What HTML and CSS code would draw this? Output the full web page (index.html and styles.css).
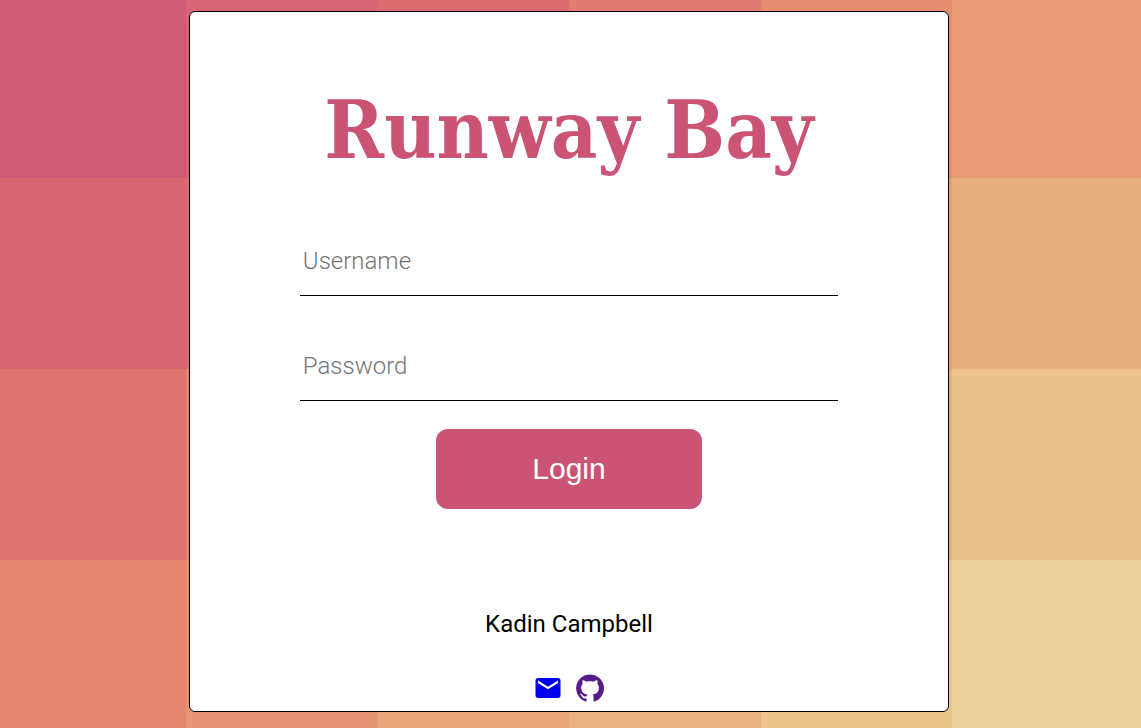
FILE: index.html
```html
<!DOCTYPE html>
<html lang="en">
<head>
<meta charset="utf-8">
<meta name="viewport" content="width=device-width, initial-scale=1">
<title>Runway Bay</title>
<link rel="stylesheet" href="styles.css">
</head>
<body>
<svg class="backdrop" viewBox="0 0 1141 728" preserveAspectRatio="none" shape-rendering="crispEdges" aria-hidden="true">
  <rect width="1141" height="728" fill="#e17c72"/>
  <rect width="186" height="178" fill="#d05b76"/>
  <rect x="186" width="191" height="178" fill="#d86575"/>
  <rect x="377" width="192" height="178" fill="#db6d70"/>
  <rect x="569" width="192" height="178" fill="#e17c72"/>
  <rect x="761" width="191" height="178" fill="#e68d70"/>
  <rect x="952" width="189" height="178" fill="#e79c77"/>
  <rect y="178" width="186" height="191" fill="#d66670"/>
  <rect x="186" y="178" width="383" height="191" fill="#db6d70"/>
  <rect x="569" y="178" width="383" height="191" fill="#e79c77"/>
  <rect x="952" y="178" width="189" height="191" fill="#e8af7f"/>
  <rect y="369" width="186" height="191" fill="#de746f"/>
  <rect x="186" y="369" width="383" height="191" fill="#e5846f"/>
  <rect x="569" y="369" width="383" height="191" fill="#e8af7f"/>
  <rect x="952" y="369" width="189" height="191" fill="#eac28b"/>
  <rect y="560" width="186" height="168" fill="#e5846f"/>
  <rect x="186" y="560" width="191" height="168" fill="#e69474"/>
  <rect x="377" y="560" width="192" height="168" fill="#e9a57a"/>
  <rect x="569" y="560" width="192" height="168" fill="#ebb281"/>
  <rect x="761" y="560" width="191" height="168" fill="#ecc58d"/>
  <rect x="952" y="560" width="189" height="168" fill="#ead099"/>
</svg>
<main class="card">
  <h1 class="title">Runway Bay</h1>
  <form class="login">
    <input class="field" type="text" name="username" placeholder="Username" aria-label="Username">
    <input class="field" type="password" name="password" placeholder="Password" aria-label="Password">
    <button class="submit" type="submit">Login</button>
  </form>
  <footer class="footer">
    <p class="author">Kadin Campbell</p>
    <nav class="links" aria-label="Contact">
      <a class="link mail" href="#mail" aria-label="Email"><svg class="icon" viewBox="0 0 24 24"><path fill="currentColor" d="M20 4H4c-1.100 0-2 .9-2 2v12c0 1.100.9 2 2 2h16c1.100 0 2-.9 2-2V6c0-1.100-.9-2-2-2zm0 4l-8 5-8-5V6l8 5 8-5v2z"/></svg></a>
      <a class="link github" href="#github" aria-label="GitHub"><svg class="icon" viewBox="0 0 24 24"><path fill="currentColor" d="M12 1.270a11 11 0 0 0-3.480 21.460c.55.09.73-.28.73-.55v-1.840c-3.030.64-3.670-1.460-3.670-1.460-.55-1.290-1.280-1.650-1.280-1.650-.92-.65.100-.65.100-.65 1.100 0 1.730 1.100 1.730 1.100.92 1.650 2.570 1.200 3.210.92a2 2 0 0 1 .64-1.470c-2.470-.27-5.040-1.190-5.040-5.500 0-1.100.46-2.100 1.200-2.840a3.760 3.760 0 0 1 0-2.930s.91-.28 3.110 1.100c1.800-.49 3.700-.49 5.500 0 2.100-1.380 3.020-1.100 3.020-1.100a3.760 3.760 0 0 1 .1 2.930c.83.740 1.200 1.740 1.200 2.940 0 4.210-2.570 5.130-5.040 5.400.45.370.82.920.82 2.020v3.030c0 .27.100.64.730.55A11 11 0 0 0 12 1.270"/></svg></a>
    </nav>
  </footer>
</main>
</body>
</html>
```
FILE: styles.css
```css
* {
  box-sizing: border-box;
}

body {
  margin: 0;
  min-height: 100vh;
  padding: 11px 3px 16px 0;
  font-family: Roboto, "Liberation Sans", sans-serif;
}

.backdrop {
  position: fixed;
  inset: 0;
  z-index: -1;
  width: 100%;
  height: 100%;
}

.card {
  display: flex;
  flex-direction: column;
  align-items: center;
  width: 66.8%;
  margin: 0 auto;
  padding: 68px 0 8px;
  border: 1px solid #000;
  border-radius: 6px;
  background: #fff;
}

.title {
  margin: 0;
  color: #cb5475;
  font: bold 80px/100px "DejaVu Serif Condensed", "DejaVu Serif", serif;
}

.login {
  display: flex;
  flex-direction: column;
  align-items: center;
  width: 71%;
  margin-top: 46px;
}

.field {
  width: 100%;
  height: 70px;
  margin-bottom: 35px;
  padding: 0 3px;
  border: 0;
  border-bottom: 1px solid #000;
  background: transparent;
  font: 300 24px Roboto, sans-serif;
}

.field + .submit {
  margin-top: -7px;
}

.field::placeholder {
  color: #757575;
  opacity: 1;
}

.submit {
  width: 266px;
  height: 80px;
  border: 0;
  border-radius: 12px;
  background: #cb5475;
  color: #fff;
  font: 30px "Liberation Sans", Arial, sans-serif;
}

.footer {
  display: flex;
  flex-direction: column;
  align-items: center;
  gap: 34px;
  margin-top: 100px;
}

.author {
  margin: 0;
  font-size: 24px;
  line-height: 30px;
}

.links {
  display: flex;
  gap: 12px;
}

.link {
  display: flex;
}

.mail {
  color: #0000ee;
}

.github {
  color: #551a8b;
}

.icon {
  width: 30px;
  height: 30px;
}
```
